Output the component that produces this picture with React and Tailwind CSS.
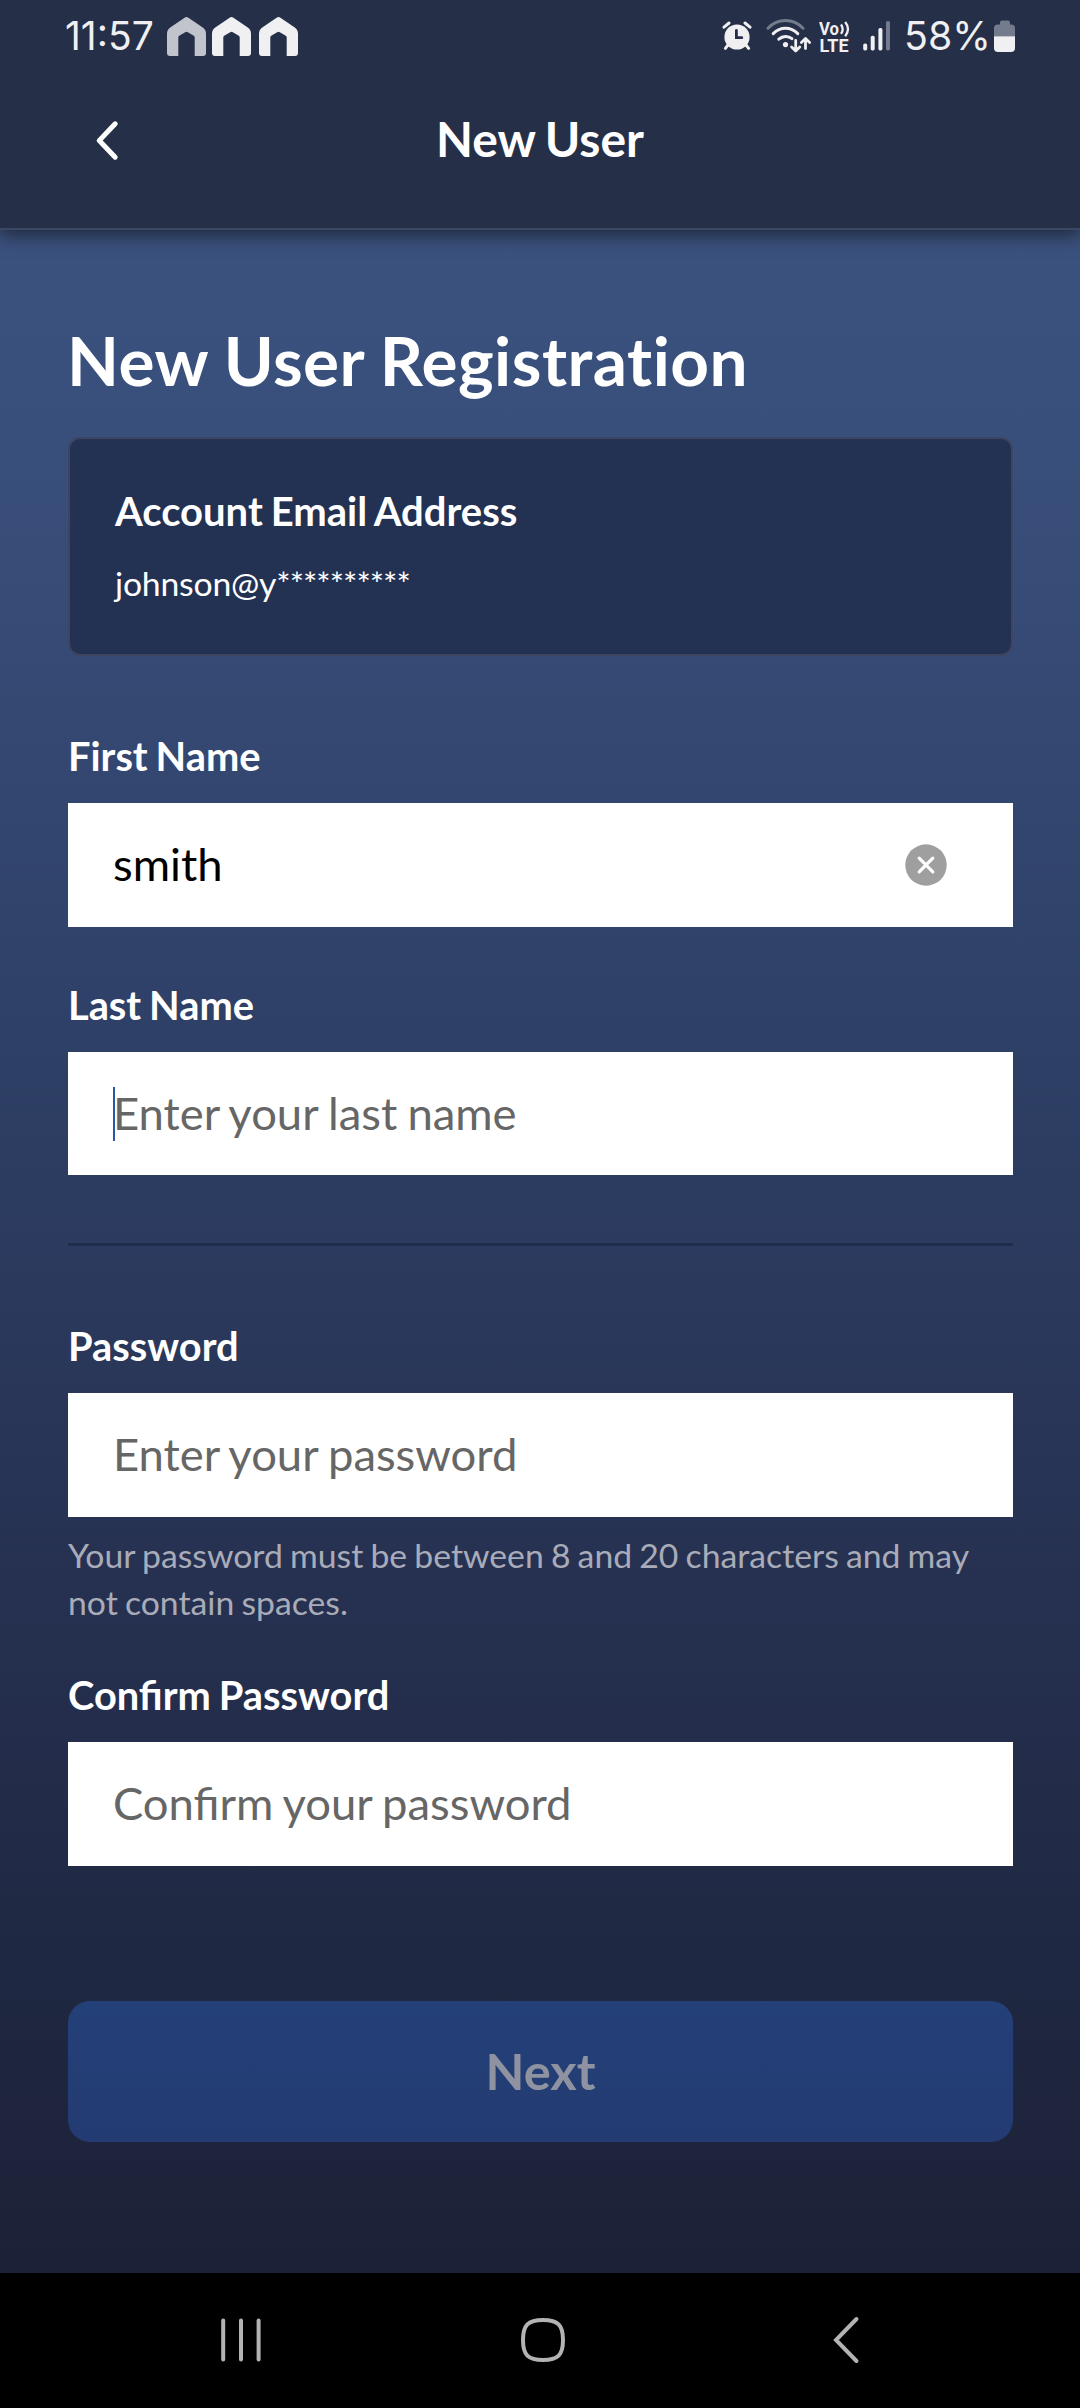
import React from "react";

function HouseIcon({ className }) {
  return (
    <svg width="39" height="39" viewBox="0 0 39 39" className={className} fill="currentColor">
      <path d="M17.6 0.7Q19.5 -0.6 21.4 0.7L35.4 10.2Q39 12.6 39 16.8V36Q39 39 36 39H27.7V20.6Q27.7 19.4 26.8 18.7L20.8 15.2Q19.5 14.2 18.2 15.2L12.2 18.7Q11.3 19.4 11.3 20.6V39H3Q0 39 0 36V16.8Q0 12.6 3.6 10.2Z" />
    </svg>
  );
}

function AlarmIcon() {
  return (
    <svg width="30" height="30" viewBox="0 0 30 30" fill="none" strokeLinecap="round">
      <path d="M2 6.2L7 2M23 2l5 4.2M6 24l-2.6 3.4M24 24l2.6 3.4" stroke="#f0f0f3" strokeWidth="3" />
      <circle cx="15" cy="16" r="12.6" fill="#f0f0f3" />
      <path d="M14.4 9.5v7.2h5.4" stroke="#252f47" strokeWidth="2.8" />
    </svg>
  );
}

function WifiIcon() {
  return (
    <svg width="46" height="34" viewBox="0 0 46 34" fill="none" strokeLinecap="round" strokeLinejoin="round">
      <path d="M2 9.2C12 -1 27 -1 37 9.2" stroke="#737b8c" strokeWidth="3" />
      <path d="M7.2 14.6C14.4 7.6 24.6 7.6 31.8 14.6" stroke="#f0f0f3" strokeWidth="3" />
      <path d="M12.8 20.2C16.8 16.6 22.2 16.6 26 19.6" stroke="#f0f0f3" strokeWidth="3" />
      <circle cx="19.5" cy="25.6" r="2.6" fill="#f0f0f3" />
      <path d="M29.7 21.5v10M25.6 28l4.1 4 4.1-4M39.5 29.5v-9.5M35.4 23.4l4.1-4 4.1 4" stroke="#f0f0f3" strokeWidth="2.8" />
    </svg>
  );
}

function VolteIcon() {
  return (
    <svg width="32" height="44" viewBox="0 -5 32 44" fill="#f0f0f3">
      <text x="0" y="15.5" fontFamily="Roboto" fontWeight="700" fontSize="17.5" textLength="20" lengthAdjust="spacingAndGlyphs">Vo</text>
      <path d="M22 5.5q3.4 4.7 0 9.4M26.2 3q5.6 7 0 14.2" fill="none" stroke="#f0f0f3" strokeWidth="2.3" />
      <text x="0.5" y="32.5" fontFamily="Roboto" fontWeight="700" fontSize="17.5" textLength="29" lengthAdjust="spacingAndGlyphs">LTE</text>
    </svg>
  );
}

function SignalIcon() {
  return (
    <svg width="28" height="30" viewBox="0 0 28 30">
      <rect x="0.2" y="22.4" width="4" height="7" rx="1.6" fill="#f0f0f3" />
      <rect x="7.7" y="14.8" width="4" height="14.6" rx="1.6" fill="#f0f0f3" />
      <rect x="15.4" y="7" width="4" height="22.4" rx="1.6" fill="#f0f0f3" />
      <rect x="23" y="0" width="4" height="29.4" rx="1.6" fill="#737b8c" />
    </svg>
  );
}

function BatteryIcon() {
  return (
    <svg width="22" height="32" viewBox="0 0 22 32">
      <path d="M6 2.6Q6 0.6 8 0.6h6q2 0 2 2v1.8h1.3Q21 4.4 21 8v8.2H0V8Q0 4.4 3.7 4.4H6Z" fill="#737b8c" />
      <path d="M0 16.2h21V28q0 4-4 4H4q-4 0-4-4Z" fill="#f0f0f3" />
    </svg>
  );
}

function StatusBar() {
  return (
    <div className="flex h-[72px] items-center justify-between pr-[64px] pl-[65px] font-['Inter'] text-[#f0f0f3]">
      <div className="flex items-center">
        <span className="w-[102px] text-[39px] leading-[72px] whitespace-nowrap">11:57</span>
        <div className="flex items-center pt-[1px]">
          <HouseIcon className="text-[#c1c4cd]" />
          <HouseIcon className="ml-[6px]" />
          <HouseIcon className="ml-[8px]" />
        </div>
      </div>
      <div className="flex items-center">
        <AlarmIcon />
        <div className="ml-[14px]"><WifiIcon /></div>
        <div className="ml-[7px]"><VolteIcon /></div>
        <div className="ml-[12px]"><SignalIcon /></div>
        <span className="ml-[13px] w-[90px] text-[39.3px] leading-[72px] whitespace-nowrap">58%</span>
        <BatteryIcon />
      </div>
    </div>
  );
}

function Header() {
  return (
    <header className="relative z-10 h-[230px] border-b-2 border-[#3d4763] bg-[#252f47] shadow-[0_6px_16px_rgba(28,36,52,0.85)]">
      <StatusBar />
      <div className="grid h-[136px] grid-cols-[1fr_auto_1fr] items-center">
        <svg width="26" height="42" viewBox="0 0 26 42" className="ml-[94px]" fill="none" stroke="#fff" strokeWidth="5" strokeLinecap="round" strokeLinejoin="round">
          <path d="M21.2 4.8L5.2 21.6L21.2 38.2" />
        </svg>
        <h1 className="pb-[3px] text-[48px] leading-[60px] font-bold [word-spacing:-2px]">New User</h1>
      </div>
    </header>
  );
}

function Label({ children }) {
  return <span className="block text-[39.8px] leading-[44px] font-bold [word-spacing:-1.8px]">{children}</span>;
}

function Field({ label, placeholder, value, type = "text", focused, className, boxHeight = "h-[124px]" }) {
  return (
    <label className={`block ${className}`}>
      <Label>{label}</Label>
      <span className={`relative mt-[25px] flex items-center bg-white px-[45px] ${boxHeight}`}>
        {focused && <span className="absolute top-[35px] left-[45px] h-[54px] w-[2px] bg-[#2857a8]" />}
        <input
          type={type}
          defaultValue={value}
          placeholder={placeholder}
          className="min-w-0 flex-1 bg-transparent pb-[2px] text-[45.4px] leading-[54px] text-black outline-none [word-spacing:-1.4px] placeholder:text-[#666666]"
        />
        {value && (
          <svg width="42" height="42" viewBox="0 0 42 42" className="mr-[21px]">
            <circle cx="21" cy="21" r="20.7" fill="#9f9f9f" />
            <path d="M14.2 14.2l13.6 13.6M27.8 14.2L14.2 27.8" stroke="#fff" strokeWidth="3.2" strokeLinecap="round" />
          </svg>
        )}
      </span>
    </label>
  );
}

function NavBar() {
  return (
    <nav className="flex h-[135px] items-center bg-black pb-[1px] pl-[220px]">
      <svg width="42" height="46" viewBox="0 0 42 46" stroke="#b3b3b3" strokeWidth="4" strokeLinecap="round">
        <path d="M3.2 3.5v39M21 3.5v39M38.6 3.5v39" />
      </svg>
      <svg width="46" height="46" viewBox="0 0 46 46" className="ml-[258px]" fill="none" stroke="#b3b3b3" strokeWidth="4">
        <path d="M23 3C38 3 43 8 43 23S38 43 23 43S3 38 3 23S8 3 23 3Z" />
      </svg>
      <svg width="30" height="50" viewBox="0 0 30 50" className="ml-[265px]" fill="none" stroke="#b3b3b3" strokeWidth="4" strokeLinecap="round">
        <path d="M25.5 4L5 25L25.5 46" />
      </svg>
    </nav>
  );
}

export default function App() {
  return (
    <div className="flex h-[2408px] w-[1080px] flex-col overflow-hidden font-['Lato',sans-serif] text-white">
      <Header />
      <main className="flex-1 bg-[linear-gradient(to_bottom,#3b517e_0px,#394f7b_220px,#2f4168_770px,#252f4e_1430px,#1f2842_1730px,#1d2137_2043px)] pr-[67px] pl-[68px]">
        <h2 className="mt-[90px] -ml-[1px] text-[67.5px] leading-[80px] font-bold tracking-[0.5px] [font-variant-ligatures:none] [word-spacing:-1px]">
          New User Registration
        </h2>
        <section className="mt-[37px] h-[219px] rounded-[12px] border-2 border-[#3e4560] bg-[#233153] px-[45px] pt-[48px]">
          <h3 className="text-[40px] leading-[48px] font-bold [word-spacing:-1.8px]">Account Email Address</h3>
          <p className="mt-[28px] text-[33.75px] leading-[40px] tracking-[-0.2px]">
            johnson@y<span className="tracking-[-1px]">**********</span>
          </p>
        </section>
        <Field className="mt-[78px]" label="First Name" placeholder="Enter your first name" value="smith" />
        <Field className="mt-[56px]" label="Last Name" placeholder="Enter your last name" focused boxHeight="h-[123px]" />
        <hr className="mt-[68px] h-[3px] border-0 bg-[#1f2c4b]" />
        <Field className="mt-[78px]" label="Password" placeholder="Enter your password" type="password" />
        <p className="mt-[15px] text-[33.75px] leading-[47px] text-[#a9acb8] [word-spacing:-1.5px]">
          Your password must be between 8 and 20 characters and may not contain spaces.
        </p>
        <Field className="mt-[47px]" label="Confirm Password" placeholder="Confirm your password" type="password" />
        <button className="mt-[135px] flex h-[141px] w-full items-center justify-center rounded-[22px] bg-[linear-gradient(to_bottom,#244079,#233b72)] pb-[2px] text-[50.6px] font-bold text-[#8f93a1]">
          Next
        </button>
      </main>
      <NavBar />
    </div>
  );
}
